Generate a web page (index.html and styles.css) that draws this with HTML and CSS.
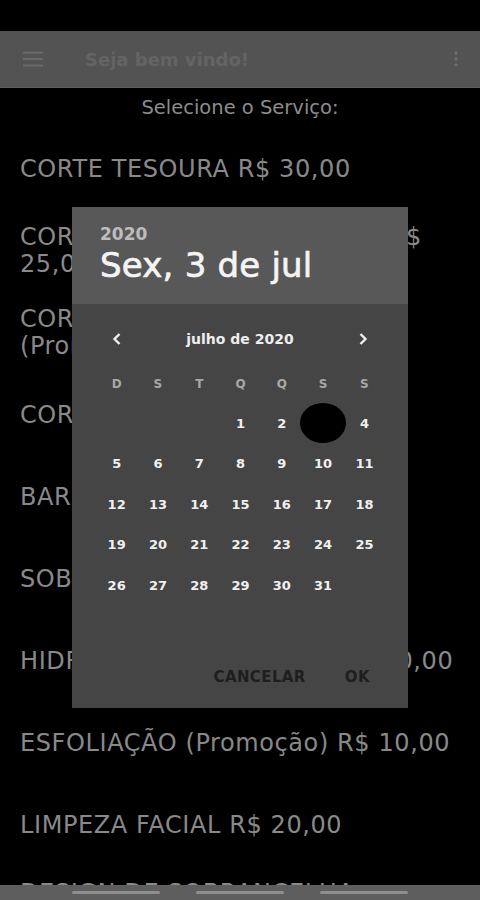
FILE: index.html
```html
<!DOCTYPE html>
<html lang="pt-BR">
<head>
<meta charset="utf-8">
<title>Seja bem vindo!</title>
<link rel="stylesheet" href="styles.css">
</head>
<body>
<div class="screen">
  <div class="statusbar"></div>
  <header class="appbar">
    <svg class="menu-icon" width="24" height="24" viewBox="0 0 24 24"><path d="M1 4h22v2.2H1zM1 11h22v2.2H1zM1 18h22v2.2H1z" fill="currentColor"/></svg>
    <h1 class="title">Seja bem vindo!</h1>
    <svg class="more-icon" width="24" height="24" viewBox="0 0 24 24"><circle cx="12" cy="5" r="2" fill="currentColor"/><circle cx="12" cy="12" r="2" fill="currentColor"/><circle cx="12" cy="19" r="2" fill="currentColor"/></svg>
  </header>
  <p class="subtitle">Selecione o Serviço:</p>
  <ul class="services">
    <li>CORTE TESOURA R$ 30,00</li>
    <li>CORTE MÁQUINA E TESOURA R$ 25,00</li>
    <li>CORTE MÁQUINA E TESOURA (Promoção) R$ 20,00</li>
    <li>CORTE MÁQUINA R$ 20,00</li>
    <li>BARBA R$ 15,00</li>
    <li>SOBRANCELHA R$ 10,00</li>
    <li>HIDRATAÇÃO (Promoção) R$ 20,00</li>
    <li>ESFOLIAÇÃO (Promoção) R$ 10,00</li>
    <li>LIMPEZA FACIAL R$ 20,00</li>
    <li>DESIGN DE SOBRANCELHA (Promoção) R$ 15,00</li>
  </ul>
  <nav class="navbar">
    <span class="nav-line"></span>
    <span class="nav-line"></span>
    <span class="nav-line"></span>
  </nav>

  <div class="dialog">
    <div class="dialog-header">
      <div class="year">2020</div>
      <div class="date">Sex, 3 de jul</div>
    </div>
    <div class="dialog-body">
      <div class="month-nav">
        <span class="arrow-box"><svg width="16" height="16" viewBox="0 0 16 16"><path d="M10.5 3L5.5 8l5 5" fill="none" stroke="currentColor" stroke-width="2.4"/></svg></span>
        <span class="month">julho de 2020</span>
        <span class="arrow-box"><svg width="16" height="16" viewBox="0 0 16 16"><path d="M5.5 3l5 5-5 5" fill="none" stroke="currentColor" stroke-width="2.4"/></svg></span>
      </div>
      <div class="grid weekdays">
        <span>D</span><span>S</span><span>T</span><span>Q</span><span>Q</span><span>S</span><span>S</span>
      </div>
      <div class="grid days">
        <span></span><span></span><span></span><span>1</span><span>2</span><span class="selected">3</span><span>4</span>
        <span>5</span><span>6</span><span>7</span><span>8</span><span>9</span><span>10</span><span>11</span>
        <span>12</span><span>13</span><span>14</span><span>15</span><span>16</span><span>17</span><span>18</span>
        <span>19</span><span>20</span><span>21</span><span>22</span><span>23</span><span>24</span><span>25</span>
        <span>26</span><span>27</span><span>28</span><span>29</span><span>30</span><span>31</span><span></span>
      </div>
      <div class="actions">
        <span class="btn">CANCELAR</span>
        <span class="btn">OK</span>
      </div>
    </div>
  </div>
</div>
</body>
</html>
```
FILE: styles.css
```css
* { box-sizing: border-box; }
html, body {
  margin: 0;
  padding: 0;
  background: #000;
}
body {
  font-family: "DejaVu Sans", "Liberation Sans", Arial, sans-serif;
}
.screen {
  position: relative;
  width: 480px;
  height: 900px;
  overflow: hidden;
  background: #000;
  display: flex;
  flex-direction: column;
}
.statusbar {
  height: 31px;
  flex: none;
}
.appbar {
  height: 57px;
  flex: none;
  background: #535353;
  border-bottom: 1px solid #5c5c5c;
  display: flex;
  align-items: center;
  padding: 0 14px 0 21px;
}
.menu-icon {
  color: #6a6a6a;
  width: 24px;
  height: 22px;
}
.title {
  margin: 0 0 0 40px;
  font-size: 18px;
  font-weight: 700;
  color: #646464;
  flex: 1;
}
.more-icon {
  color: #6e6e6e;
  width: 20px;
  height: 20px;
}
.subtitle {
  margin: 0;
  height: 40px;
  line-height: 40px;
  text-align: center;
  font-size: 19.5px;
  color: #8c8c8c;
  flex: none;
}
.services {
  list-style: none;
  margin: 0;
  padding: 0;
  flex: none;
}
.services li {
  min-height: 82px;
  display: flex;
  align-items: center;
  padding: 0 14px 0 20px;
  font-size: 24px;
  letter-spacing: 0.6px;
  line-height: 27px;
  color: #898989;
}
.navbar {
  position: absolute;
  left: 0;
  right: 0;
  bottom: 0;
  height: 15px;
  background: #5e5e5e;
  display: flex;
  justify-content: center;
  align-items: center;
  gap: 36px;
  padding-bottom: 1px;
}
.nav-line {
  width: 88px;
  height: 3px;
  border-radius: 2px;
  background: #8e8e8e;
}
.dialog {
  position: absolute;
  left: 72px;
  top: 207px;
  width: 336px;
  height: 501px;
  background: #454545;
  display: flex;
  flex-direction: column;
}
.dialog-header {
  height: 97px;
  background: #585858;
  padding: 17px 28px 0;
}
.year {
  font-size: 17px;
  font-weight: 700;
  color: #bdbdbd;
  line-height: 20px;
}
.date {
  font-size: 34px;
  font-weight: 400;
  color: #f4f4f4;
  line-height: 42px;
  letter-spacing: 0.2px;
  -webkit-text-stroke: 0.7px #f4f4f4;
}
.dialog-body {
  flex: 1;
  display: flex;
  flex-direction: column;
  padding: 0 24px;
}
.month-nav {
  height: 70px;
  display: flex;
  align-items: center;
  justify-content: space-between;
  color: #eee;
}
.arrow-box {
  width: 41.3px;
  display: flex;
  justify-content: center;
}
.month {
  font-size: 14px;
  font-weight: 700;
  color: #eee;
}
.grid {
  display: grid;
  grid-template-columns: repeat(7, 41.3px);
}
.grid span {
  position: relative;
  display: flex;
  align-items: center;
  justify-content: center;
}
.weekdays span {
  height: 19px;
  font-size: 12px;
  font-weight: 700;
  color: #a8a8a8;
}
.days {
  margin-top: 10px;
}
.days span {
  height: 40.5px;
  font-size: 13px;
  font-weight: 700;
  color: #f0f0f0;
}
.days span.selected {
  color: #000;
  z-index: 0;
}
.days span.selected::before {
  content: "";
  position: absolute;
  left: 50%;
  top: 50%;
  width: 46px;
  height: 40px;
  margin: -20px 0 0 -23px;
  border-radius: 50%;
  background: #000;
  z-index: -1;
}
.actions {
  margin-top: auto;
  height: 62px;
  display: flex;
  justify-content: flex-end;
  align-items: center;
  gap: 39px;
  padding: 0 14px 0 0;
}
.btn {
  font-size: 15px;
  font-weight: 700;
  letter-spacing: 0.4px;
  color: #1e1e1e;
}
```
